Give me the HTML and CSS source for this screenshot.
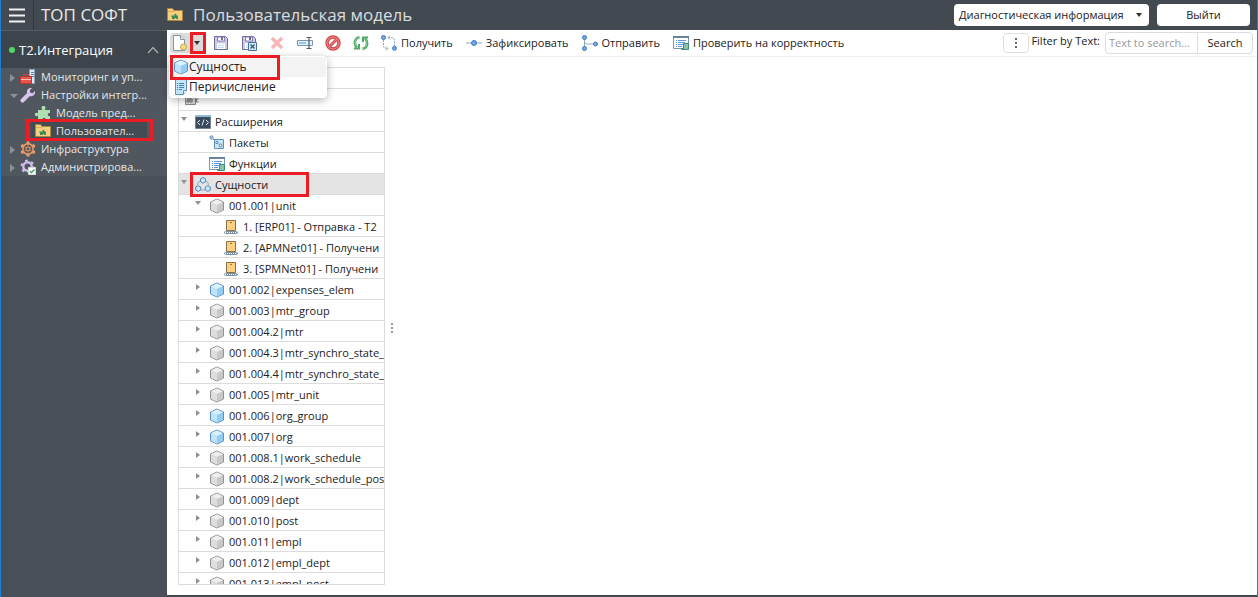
FILE: index.html
```html
<!DOCTYPE html>
<html lang="ru">
<head>
<meta charset="utf-8">
<title>Пользовательская модель</title>
<link rel="stylesheet" href="styles.css">
</head>
<body>
<svg class="sprite" aria-hidden="true">
  <symbol id="cube-gray" viewBox="0 0 16 16"><path d="M8 1l6.500 3v8L8 15l-6.500-3V4z" fill="#d6d6d6" stroke="#929292"/><path d="M8 1.500L14 4.200 8 7 2 4.200z" fill="#efefef"/><path d="M8 7l6-2.700v7.400L8 14.500z" fill="#c9c9c9"/><path d="M2 4.300L8 7v7.500l-6-2.800z" fill="#dedede"/></symbol>
  <symbol id="cube-blue" viewBox="0 0 16 16"><path d="M8 1l6.500 3v8L8 15l-6.500-3V4z" fill="#b5dffa" stroke="#5b8fc9"/><path d="M8 1.500L14 4.200 8 7 2 4.200z" fill="#dcf1ff"/><path d="M8 7l6-2.700v7.400L8 14.500z" fill="#93cdf4"/><path d="M2 4.300L8 7v7.500l-6-2.800z" fill="#bfe5fc"/></symbol>
  <symbol id="folder" viewBox="0 0 16 16"><path d="M.5 13.500v-12h5l1.500 2h8.500v10z" fill="#f6cf7e" stroke="#a98645"/><path d="M1 4.500h6" stroke="#dcae5c"/><path d="M5 12V9.800C4 10.200 4 8.200 5 8.500h2.500c-.8-2.500 2.500-2.500 2 0H11V12H9c.3-1.300-1.600-1.300-1.300 0z" fill="#3f8b54"/></symbol>
  <symbol id="box" viewBox="0 0 16 16"><path d="M3.500 1.500h9v10h-9z" fill="#fccf83" stroke="#8d7044"/><path d="M7 3.500h2" stroke="#8d7044"/><path d="M2.500 12.500h11l1.500 1-1.500 1h-11L1 13.500z" fill="#fff" stroke="#7b93ab"/><path d="M3 13.500h11" stroke="#7b93ab" stroke-dasharray="1 1"/></symbol>
  <symbol id="check-form" viewBox="0 0 16 16"><path d="M.5 1.500h15v12H.5z" fill="#fff" stroke="#7d93a8"/><path d="M0 2h16" stroke="#68849e" stroke-width="2"/><path d="M3 5.500h1m1 0h8M3 7.500h1m1 0h7M3 9.500h1m1 0h5M3 11.500h1m1 0h4" stroke="#5a96df"/><path d="M10.500 8.500h5v6h-7v-1h2z" fill="#8bc3aa" stroke="#408b74"/></symbol>
  <symbol id="wrench" viewBox="0 0 16 16"><path d="M2.500 13.500l6-6" stroke="#d8c6ef" stroke-width="4" stroke-linecap="round"/><path d="M7 5.500C6.500 2.500 9 .5 12 1L9.800 3.300l.5 2.400 2.400.5L15 4c.7 3-1.600 5.600-4.700 5.200z" fill="#d8c6ef"/></symbol>
  <symbol id="puzzle" viewBox="0 0 16 16"><path d="M3 15v-4.500C.8 12 0 11 0 9.500S1 7 3 8.200V5h4.300C5.800 2.500 6.800 1 8.500 1s2.700 1.500 1.300 4H15v3.200c-2.800-1-3 3.800 0 3V15h-4.500c.8-3-3.600-3-2.800 0z" fill="#aee0b4"/></symbol>
  <symbol id="disk" viewBox="0 0 16 16"><path d="M1.500 1.500h11l2 2v11h-13z" fill="#cfc9e8" stroke="#716b9b"/><path d="M4.500 2h7v4h-7z" fill="#fff" stroke="#857fac"/><path d="M9 2v3" stroke="#716b9b" stroke-width="2"/><path d="M4 8.500h8V14H4z" fill="#fff"/><path d="M5 10.500h6m-6 2h6" stroke="#b6dcf6"/></symbol>
</svg>

<div class="window">
  <header class="header">
    <button class="burger" aria-label="Меню"><svg width="16" height="15" viewBox="0 0 16 15"><path d="M0 1.500h16M0 7.500h16M0 13.500h16" stroke="#f2f2f2" stroke-width="2"/></svg></button>
    <div class="brand">ТОП СОФТ</div>
    <h1 class="title"><svg class="icon"><use href="#folder"/></svg>Пользовательская модель</h1>
    <button class="diag">Диагностическая информация<span class="caret"></span></button>
    <button class="logout">Выйти</button>
  </header>

  <div class="body">
    <nav class="sidebar">
      <button class="group"><span class="dot"></span><span class="group-name">Т2.Интеграция</span><svg width="12" height="8" viewBox="0 0 12 8"><path d="M1 7l5-5.500L11 7" fill="none" stroke="#a6abb0" stroke-width="1.300"/></svg></button>
      <ul class="nav-list">
        <li><a class="nav-item" href="#"><span class="arrow arrow-right"></span><svg class="icon" viewBox="0 0 16 16"><path d="M9.500.5h5v14h-5z" fill="#dce9f3" stroke="#87a4bb"/><path d="M11 3.500h3m-3 2h3m-3 2h3" stroke="#66839c"/><path d="M.5 7.500h11v7H.5z" fill="#e9554c" stroke="#b93630"/><path d="M3.500 7V5.500h5V7" fill="none" stroke="#d6453d"/><path d="M1 10.500h10" stroke="#ffc0b7"/></svg><span class="nav-text">Мониторинг и уп...</span></a></li>
        <li><a class="nav-item" href="#"><span class="arrow arrow-down"></span><svg class="icon"><use href="#wrench"/></svg><span class="nav-text">Настройки интегр...</span></a></li>
        <li><a class="nav-item nested" href="#"><svg class="icon"><use href="#puzzle"/></svg><span class="nav-text">Модель пред...</span></a></li>
        <li class="marked mark-nav"><a class="nav-item nested current" href="#"><svg class="icon"><use href="#folder"/></svg><span class="nav-text">Пользовател...</span></a></li>
        <li><a class="nav-item" href="#"><span class="arrow arrow-right"></span><svg class="icon" viewBox="0 0 16 16"><path d="M8 2l5 3v6l-5 3-5-3V5z" fill="none" stroke="#e79b68" stroke-width="1.500"/><path d="M8 2v12M3 5l10 6M13 5L3 11" stroke="#c9794a"/><circle cx="8" cy="8" r="2" fill="#50575f" stroke="#e79b68"/><g fill="#e79b68"><circle cx="8" cy="2" r="1.800"/><circle cx="13.500" cy="5" r="1.800"/><circle cx="13.500" cy="11" r="1.800"/><circle cx="8" cy="14" r="1.800"/><circle cx="2.500" cy="11" r="1.800"/><circle cx="2.500" cy="5" r="1.800"/></g></svg><span class="nav-text">Инфраструктура</span></a></li>
        <li><a class="nav-item" href="#"><span class="arrow arrow-right"></span><svg class="icon" viewBox="0 0 16 16"><circle cx="7.500" cy="7.500" r="4.200" fill="none" stroke="#cfbcea" stroke-width="2.400"/><circle cx="7.500" cy="7.500" r="6" fill="none" stroke="#cfbcea" stroke-width="2" stroke-dasharray="2.700 3.580"/><path d="M8.500 8.500h7v7h-7z" fill="#fff" stroke="#d5dbe0"/><path d="M10 12l1.500 1.600L14.500 10.500" fill="none" stroke="#2f965b" stroke-width="1.200"/></svg><span class="nav-text">Администрирова...</span></a></li>
      </ul>
    </nav>

    <main class="main">
      <div class="toolbar">
        <div class="split marked mark-split">
          <button class="tool" aria-label="Создать"><svg class="icon" viewBox="0 0 16 16"><path d="M1.500.5h7l4 4v11h-11z" fill="#fff" stroke="#8795a2"/><path d="M8.500.5v4h4" fill="#e6edf3" stroke="#8795a2"/><circle cx="11.500" cy="12" r="3" fill="#f5df87" stroke="#c7a24a"/></svg></button>
          <button class="split-arrow" aria-label="Выбрать тип"><span class="caret"></span></button>
          <div class="menu" role="menu">
            <button class="menu-item hovered marked mark-menu" role="menuitem"><svg class="icon"><use href="#cube-blue"/></svg>Сущность</button>
            <button class="menu-item" role="menuitem"><svg class="icon" viewBox="0 0 16 16"><path d="M2.500.5h11v11l-3 4h-8z" fill="#c4e4fa" stroke="#5c91ba"/><path d="M13.500 11.500h-3v4" fill="#fff" stroke="#5c91ba"/><path d="M4 4.500h1m1 0h5M4 6.500h1m1 0h5M4 8.500h1m1 0h5M4 10.500h1m1 0h3" stroke="#3f80bb"/></svg>Перичисление</button>
          </div>
        </div>
        <button class="tool" aria-label="Сохранить"><svg class="icon"><use href="#disk"/></svg></button>
        <button class="tool" aria-label="Сохранить и закрыть"><svg class="icon" viewBox="0 0 16 16"><use href="#disk"/><path d="M7.500 7.500h8v8h-8z" fill="#d2eafb" stroke="#47739d"/><path d="M9.500 9.500l4 4m0-4l-4 4" stroke="#33587d" stroke-width="1.300"/></svg></button>
        <button class="tool" aria-label="Удалить" disabled><svg class="icon" viewBox="0 0 16 16"><path d="M3 3l10 10M13 3L3 13" stroke="#f4b8b6" stroke-width="3.500"/></svg></button>
        <button class="tool" aria-label="Переименовать"><svg class="icon" viewBox="0 0 16 16"><path d="M.5 5.500h15v5H.5z" fill="#e4f2fc" stroke="#7a95ac"/><path d="M2 8h7" stroke="#95c6ed" stroke-width="2"/><path d="M9.500 2.500h2l.5.500.500-.500h2m-5 11h2l.5-.500.500.500h2M12 3v10" fill="none" stroke="#4f5a65" stroke-width="1.200"/></svg></button>
        <button class="tool" aria-label="Запретить"><svg class="icon" viewBox="0 0 16 16"><circle cx="8" cy="8" r="6" fill="none" stroke="#c93f42" stroke-width="3.400"/><path d="M4 12l8-8" stroke="#c93f42" stroke-width="3"/><circle cx="8" cy="8" r="6" fill="none" stroke="#ed7777" stroke-width="1.600"/><path d="M4 12l8-8" stroke="#ed7777" stroke-width="1.300"/></svg></button>
        <button class="tool" aria-label="Обновить"><svg class="icon" viewBox="0 0 16 16"><g fill="none" stroke="#52a866" stroke-width="2.600"><path d="M6.500 2.200C1.500 3 .5 9 4 12.500M9.500 13.800C14.500 13 15.500 7 12 3.500"/><path d="M1 13.500h5V9M15 2.500h-5V7" stroke-width="2"/></g><path d="M6 2.300C2 3.500 1.300 8.500 3.500 11.500M10 13.700c4-1.200 4.700-6.200 2.500-9.200" fill="none" stroke="#87d494"/></svg></button>
        <button class="tool labelled"><svg class="icon" viewBox="0 0 16 16"><path d="M2.500 5v5.500c0 2 1 3 3 3h1M7 2.500h3c2.500 0 3.500 1 3.500 3V11" fill="none" stroke="#8da7ba" stroke-dasharray="2 1"/><path d="M9 .5l-2 2 2 2M5 11.500l2 2-2 2" fill="none" stroke="#8da7ba"/><g fill="#6fa7ed" stroke="#4379bc"><circle cx="2.500" cy="2.500" r="2"/><circle cx="13.500" cy="13.300" r="2"/></g></svg>Получить</button>
        <button class="tool labelled"><svg class="icon" viewBox="0 0 16 16"><path d="M0 8h16" stroke="#92a9bb"/><circle cx="8" cy="8" r="2.500" fill="#6fa7ed" stroke="#4379bc"/></svg>Зафиксировать</button>
        <button class="tool labelled"><svg class="icon" viewBox="0 0 16 16"><path d="M2.500 2v12m0-8c0 2 1 3 3 3H13" fill="none" stroke="#92a9bb"/><g fill="#6fa7ed" stroke="#4379bc"><circle cx="2.500" cy="2.500" r="2"/><circle cx="2.500" cy="13.500" r="2"/><circle cx="13.500" cy="9" r="2"/></g></svg>Отправить</button>
        <button class="tool labelled"><svg class="icon"><use href="#check-form"/></svg>Проверить на корректность</button>
        <form class="search">
          <button class="more" type="button" aria-label="Ещё"><svg width="4" height="12" viewBox="0 0 4 12"><path d="M1 1h2v2H1zM1 5h2v2H1zM1 9h2v2H1z" fill="#666"/></svg></button>
          <label for="filter">Filter by Text:</label>
          <div class="search-box"><input id="filter" type="text" placeholder="Text to search..."><button type="button">Search</button></div>
        </form>
      </div>

      <div class="content">
        <div class="tree">
          <div class="row blank"></div>
          <div class="row filter-row"><svg width="16" height="10" viewBox="0 0 16 10"><path d="M.5.5h10v9H.5z" fill="#d5d5d5" stroke="#888"/><path d="M2 4h2v3H2V5h2M5 2v5h2V4H5M13.500 4h-2v3h2" fill="none" stroke="#777"/></svg></div>
          <div class="row"><span class="arrow arrow-down"></span><svg class="icon" viewBox="0 0 16 16"><path d="M.5 1.500h15v13H.5z" fill="#3c4b5c" stroke="#73859a"/><path d="M0 2h16" stroke="#92bad9" stroke-width="2"/><path d="M5 6L2.500 8.500 5 11m6-5l2.500 2.500L11 11M9 5.500l-2 6" fill="none" stroke="#dbe8f2"/></svg>Расширения</div>
          <div class="row level-2"><span class="arrow"></span><svg class="icon" viewBox="0 0 16 16"><circle cx="2.500" cy="2.500" r="1.700" fill="#9ac4ed" stroke="#7198bd"/><path d="M5.500 4.500h9v9h-9z" fill="#c9e7fb" stroke="#608cb0"/><path d="M4 4.500h4" stroke="#608cb0"/><circle cx="8" cy="7.500" r="1.200" fill="#fff" stroke="#487cab"/><circle cx="11.500" cy="10.500" r="1.500" fill="#fff" stroke="#487cab"/></svg>Пакеты</div>
          <div class="row level-2"><span class="arrow"></span><svg class="icon"><use href="#check-form"/></svg>Функции</div>
          <div class="row selected marked mark-row"><span class="arrow arrow-down"></span><svg class="icon" viewBox="0 0 16 16"><path d="M5 4Q2.500 5 2.500 8M11 4q2.500 1 2.500 4M6 13h4" fill="none" stroke="#8ba6c2"/><g fill="#cae7fc" stroke="#5b86b9"><path d="M8 .5l2.500 1.300v3L8 6.200 5.500 4.800v-3z"/><path d="M3.200 8.700l2.500 1.300v3l-2.500 1.400L.7 13v-3z"/><path d="M12.800 8.700l2.500 1.300v3l-2.500 1.400-2.500-1.400v-3z"/></g></svg>Сущности</div>
          <div class="row level-2"><span class="arrow arrow-down"></span><svg class="icon"><use href="#cube-gray"/></svg>001.001|unit</div>
          <div class="row level-3"><span class="arrow"></span><svg class="icon"><use href="#box"/></svg>1. [ERP01] - Отправка - T2</div>
          <div class="row level-3"><span class="arrow"></span><svg class="icon"><use href="#box"/></svg>2. [APMNet01] - Получени</div>
          <div class="row level-3"><span class="arrow"></span><svg class="icon"><use href="#box"/></svg>3. [SPMNet01] - Получени</div>
          <div class="row level-2"><span class="arrow arrow-right"></span><svg class="icon"><use href="#cube-blue"/></svg>001.002|expenses_elem</div>
          <div class="row level-2"><span class="arrow arrow-right"></span><svg class="icon"><use href="#cube-gray"/></svg>001.003|mtr_group</div>
          <div class="row level-2"><span class="arrow arrow-right"></span><svg class="icon"><use href="#cube-gray"/></svg>001.004.2|mtr</div>
          <div class="row level-2"><span class="arrow arrow-right"></span><svg class="icon"><use href="#cube-gray"/></svg>001.004.3|mtr_synchro_state_A</div>
          <div class="row level-2"><span class="arrow arrow-right"></span><svg class="icon"><use href="#cube-gray"/></svg>001.004.4|mtr_synchro_state_</div>
          <div class="row level-2"><span class="arrow arrow-right"></span><svg class="icon"><use href="#cube-gray"/></svg>001.005|mtr_unit</div>
          <div class="row level-2"><span class="arrow arrow-right"></span><svg class="icon"><use href="#cube-blue"/></svg>001.006|org_group</div>
          <div class="row level-2"><span class="arrow arrow-right"></span><svg class="icon"><use href="#cube-blue"/></svg>001.007|org</div>
          <div class="row level-2"><span class="arrow arrow-right"></span><svg class="icon"><use href="#cube-gray"/></svg>001.008.1|work_schedule</div>
          <div class="row level-2"><span class="arrow arrow-right"></span><svg class="icon"><use href="#cube-gray"/></svg>001.008.2|work_schedule_pos</div>
          <div class="row level-2"><span class="arrow arrow-right"></span><svg class="icon"><use href="#cube-gray"/></svg>001.009|dept</div>
          <div class="row level-2"><span class="arrow arrow-right"></span><svg class="icon"><use href="#cube-gray"/></svg>001.010|post</div>
          <div class="row level-2"><span class="arrow arrow-right"></span><svg class="icon"><use href="#cube-gray"/></svg>001.011|empl</div>
          <div class="row level-2"><span class="arrow arrow-right"></span><svg class="icon"><use href="#cube-gray"/></svg>001.012|empl_dept</div>
          <div class="row level-2"><span class="arrow arrow-right"></span><svg class="icon"><use href="#cube-gray"/></svg>001.013|empl_post</div>
        </div>
        <div class="splitter"><svg width="3" height="10" viewBox="0 0 3 10"><path d="M0 0h2v2H0zM0 4h2v2H0zM0 8h2v2H0z" fill="#999"/></svg></div>
      </div>
    </main>
  </div>
</div>
</body>
</html>
```
FILE: styles.css
```css
* { box-sizing: border-box; }
body {
  margin: 0;
  font: 11px/16px "Open Sans", "Noto Sans", sans-serif;
  color: #222;
}
button, input { font: inherit; color: inherit; margin: 0; padding: 0; border: 0; background: none; }
ul { list-style: none; margin: 0; padding: 0; }
.sprite { position: absolute; width: 0; height: 0; }
.icon { width: 16px; height: 16px; flex: none; }

.window {
  display: flex;
  flex-direction: column;
  height: 100vh;
  border: solid #1c80d4;
  border-width: 0 1px;
  background: #424951;
}

.header {
  display: flex;
  align-items: center;
  flex: none;
  height: 30px;
  padding-right: 7px;
  background: #424951;
  color: #e8eaec;
}
.burger {
  display: flex;
  align-items: center;
  justify-content: center;
  width: 33px;
  height: 30px;
  border-right: 1px solid #30363c;
}
.brand { width: 133px; padding-left: 7px; font-size: 17px; line-height: 24px; }
.title {
  display: flex;
  align-items: center;
  gap: 10px;
  flex: 1;
  margin: 0;
  font-size: 17px;
  line-height: 24px;
  font-weight: 400;
  color: #d9dcdf;
}
.diag, .logout {
  height: 22px;
  border-radius: 4px;
  background: #fff;
  color: #222;
}
.diag { display: flex; align-items: center; justify-content: space-between; width: 195px; padding: 0 7px 0 5px; margin-right: 8px; white-space: nowrap; }
.logout { width: 93px; }
.caret { border: 3px solid transparent; border-top: 4px solid #333; border-bottom: 0; }

.body { display: flex; flex: 1; min-height: 0; }

.sidebar { width: 166px; flex: none; background: #484f57; color: #e4e6e8; border-top: 1px solid #555c63; }
.group {
  display: flex;
  align-items: center;
  width: 100%;
  height: 37px;
  padding: 0 8px;
  background: #3d444b;
  color: #fff;
  font-size: 13px;
}
.dot { width: 6px; height: 6px; margin-right: 4px; border-radius: 50%; background: #4cd964; }
.group-name { flex: 1; text-align: left; }
.nav-list { background: #50575f; }
.nav-item {
  display: flex;
  align-items: center;
  height: 18px;
  padding-left: 9px;
  color: inherit;
  text-decoration: none;
  white-space: nowrap;
}
.nav-item .arrow { width: 10px; padding-top: 2px; }
.nav-text { padding-left: 5px; }
.nested { margin: 0 20px 0 30px; padding-left: 4px; }
.current { background: #434b53; }

.arrow { display: flex; flex: none; width: 16px; align-self: center; }
.arrow::before { content: ""; border: 4px solid transparent; }
.arrow-right::before { border-left: 5px solid #8c9196; border-right: 0; }
.arrow-down::before { border-top: 4px solid #8c9196; border-bottom: 0; }

.main { display: flex; flex-direction: column; flex: 1; min-width: 0; margin-bottom: 2px; background: #fff; }

.toolbar {
  display: flex;
  align-items: center;
  flex: none;
  height: 27px;
  padding: 0 4px 0 3px;
  border-bottom: 1px solid #eee;
}
.tool { display: flex; align-items: center; justify-content: center; height: 20px; width: 28px; white-space: nowrap; }
.tool.labelled { width: auto; gap: 4px; padding: 0 7px 0 6px; }
.split { display: flex; width: 36px; margin-right: 1px; border-radius: 4px; background: #dcdcdc; }
.split .tool { width: 20px; }
.split-arrow { display: flex; align-items: center; justify-content: center; width: 16px; padding-right: 2px; }

.menu {
  position: absolute;
  z-index: 2;
  top: 23px;
  left: -1px;
  width: 158px;
  padding: 1px;
  border-radius: 4px;
  background: #fff;
  box-shadow: 0 2px 8px rgb(0 0 0 / 30%);
}
.menu-item { display: flex; align-items: center; width: 100%; height: 20px; padding-left: 3px; font-size: 12px; }
.hovered { background: #f3f3f3; }

.search { display: flex; align-items: center; margin-left: auto; }
.more { display: flex; align-items: center; justify-content: center; width: 26px; height: 20px; margin-right: 2px; border: 1px solid #ddd; border-radius: 4px; }
.search label { margin-right: 5px; padding-bottom: 4px; }
.search-box { display: flex; width: 148px; height: 22px; border: 1px solid #ddd; border-radius: 4px; }
.search-box input { flex: 1; min-width: 0; padding-left: 3px; }
.search-box input::placeholder { color: #999; opacity: 1; }
.search-box button { width: 55px; border-left: 1px solid #ddd; }

.content { display: flex; flex: 1; min-height: 0; padding: 10px 11px; }
.tree { width: 207px; flex: none; overflow: hidden; border: 1px solid #dcdcdc; }
.row {
  display: flex;
  align-items: center;
  height: 21px;
  padding: 2px 0 0 2px;
  border-bottom: 1px solid #dcdcdc;
  white-space: nowrap;
}
.row .icon { margin-right: 4px; }
.row .arrow { width: 14px; padding-bottom: 6px; }
.row .arrow::before { border-width: 3px; }
.row .arrow-right::before { border-left-width: 4px; border-right-width: 0; margin-left: 1px; }
.row .arrow-down::before { border-top-width: 4px; border-bottom-width: 0; }
.row.level-2 { padding-left: 16px; }
.row.level-3 { padding-left: 30px; }
.row.filter-row { height: 22px; padding: 0 0 0 6px; }
.selected { background: #e4e4e4; }

.splitter { display: flex; align-items: center; padding: 4px 0 0 6px; }

.marked { position: relative; }
.marked::after { content: ""; position: absolute; z-index: 3; border: 3px solid #ec1c24; pointer-events: none; }
.mark-nav::after { inset: -3px 14px -1px 25px; }
.mark-split::after { inset: -1px 0 -1px 20px; }
.mark-menu::after { inset: -2px 46px -3px 0; }
.mark-row::after { inset: -2px 75px -3px 11px; }
```
